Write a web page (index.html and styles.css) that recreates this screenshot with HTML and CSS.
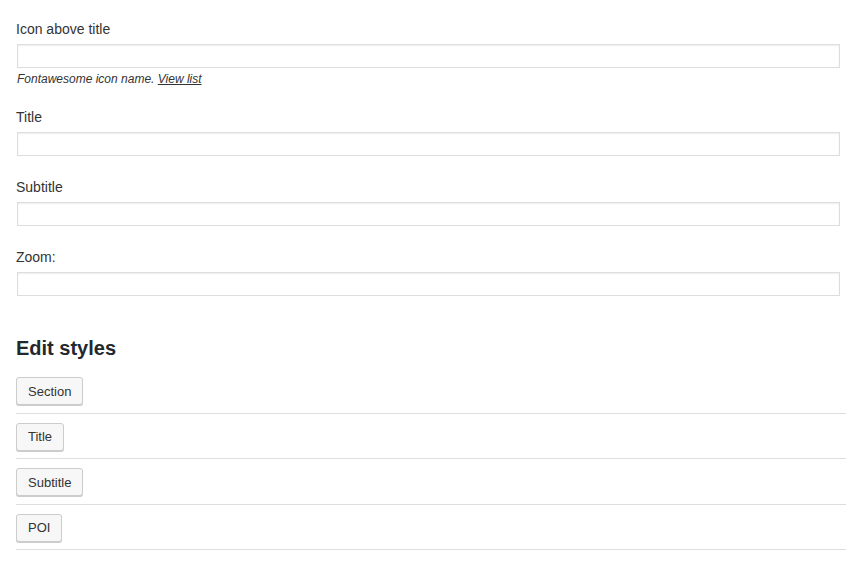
FILE: index.html
```html
<!DOCTYPE html>
<html lang="en">
<head>
    <meta charset="UTF-8">
    <title>Edit block</title>
    <link rel="stylesheet" href="styles.css">
</head>
<body>
    <div class="panel">
        <div class="field">
            <label class="field-label">Icon above title</label>
            <input type="text" class="field-input">
            <p class="help">Fontawesome icon name. <a href="#">View list</a></p>
        </div>
        <div class="field">
            <label class="field-label">Title</label>
            <input type="text" class="field-input">
        </div>
        <div class="field">
            <label class="field-label">Subtitle</label>
            <input type="text" class="field-input">
        </div>
        <div class="field">
            <label class="field-label">Zoom:</label>
            <input type="text" class="field-input">
        </div>

        <h2 class="section-title">Edit styles</h2>
        <div class="style-row"><button class="btn">Section</button></div>
        <div class="style-row"><button class="btn">Title</button></div>
        <div class="style-row"><button class="btn">Subtitle</button></div>
        <div class="style-row"><button class="btn">POI</button></div>
    </div>
</body>
</html>
```

FILE: styles.css
```css
body {
    margin: 0;
    background: #fff;
    font-family: "Liberation Sans", Arial, sans-serif;
    color: #333;
}
.panel {
    width: 830px;
    padding: 19px 0 0 16px;
}
.field {
    margin-bottom: 21px;
}
.field-label {
    display: block;
    font-size: 14px;
    line-height: 20px;
    color: #333;
    margin-bottom: 5px;
}
.field-input {
    display: block;
    box-sizing: border-box;
    width: 823px;
    height: 24px;
    margin: 0 0 0 1px;
    padding: 2px 6px;
    border: 1px solid #ddd;
    box-shadow: inset 0 1px 2px rgba(0, 0, 0, 0.07);
    background: #fff;
    font-size: 14px;
    font-family: inherit;
}
.help {
    margin: 3px 0 -1px 1px;
    font-size: 12px;
    line-height: 16px;
    font-style: italic;
    color: #333;
}
.help a {
    color: #333;
}
.section-title {
    margin: 39px 0 7px;
    font-size: 20px;
    line-height: 26px;
    font-weight: 600;
    color: #23282d;
}
.style-row {
    padding: 9px 0 7.5px;
    border-bottom: 1px solid #ddd;
}
.btn {
    display: block;
    box-sizing: border-box;
    height: 28px;
    padding: 0 11px;
    border: 1px solid #ccc;
    border-radius: 3px;
    background: #f7f7f7;
    box-shadow: 0 1px 0 #ccc;
    font-family: inherit;
    font-size: 13px;
    color: #333;
    cursor: pointer;
}
```
